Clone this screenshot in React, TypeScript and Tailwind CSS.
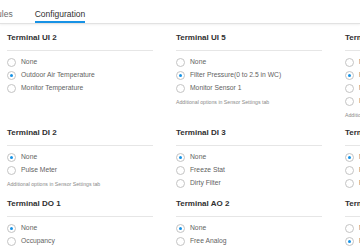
const sections = [
  {
    id: 1,
    title: "Terminal UI 2",
    options: ["None", "Outdoor Air Temperature", "Monitor Temperature"],
    selected: 1,
    note: false,
  },
  {
    id: 2,
    title: "Terminal UI 5",
    options: ["None", "Filter Pressure(0 to 2.5 in WC)", "Monitor Sensor 1"],
    selected: 1,
    note: true,
  },
  {
    id: 3,
    title: "Terminal UI 6",
    options: ["None", "Filter Pressure(0 to 2.5 in WC)", "Monitor Sensor 2", "Indoor Humidity"],
    selected: 1,
    note: true,
  },
  {
    id: 4,
    title: "Terminal DI 2",
    options: ["None", "Pulse Meter"],
    selected: 0,
    note: true,
  },
  {
    id: 5,
    title: "Terminal DI 3",
    options: ["None", "Freeze Stat", "Dirty Filter"],
    selected: 0,
    note: false,
  },
  {
    id: 6,
    title: "Terminal DI 4",
    options: ["None", "Fan Status", "Remote Occupancy"],
    selected: 0,
    note: false,
  },
  {
    id: 7,
    title: "Terminal DO 1",
    options: ["None", "Occupancy", "Alarm"],
    selected: 0,
    note: false,
  },
  {
    id: 8,
    title: "Terminal AO 2",
    options: ["None", "Free Analog", "Economizer"],
    selected: 0,
    note: false,
  },
  {
    id: 9,
    title: "Terminal AO 3",
    options: ["None", "Free Analog", "Economizer"],
    selected: 1,
    note: false,
  },
];

const Radio = ({ checked }: { checked: boolean }) => (
  <span className="flex h-[9px] w-[9px] shrink-0 items-center justify-center rounded-full border border-[#c4c4c4] bg-white">
    {checked && <span className="h-[3px] w-[3px] rounded-full bg-[#1792e5]" />}
  </span>
);

const App = () => {
  return (
    <div
      className="h-[250px] w-[360px] overflow-hidden bg-white"
      style={{ fontFamily: '"Liberation Sans", Arial, sans-serif' }}
    >
      {/* Tabs */}
      <div className="flex h-[24px] items-end border-b border-[#e2e2e2] shadow-[0_1px_2px_rgba(0,0,0,0.06)]">
        <div className="-ml-[27px] flex gap-[22px]">
          <div className="border-b-2 border-transparent pb-[1px] text-[8.5px] leading-[12px] text-[#6b6b6b]">
            Schedules
          </div>
          <div className="border-b-2 border-[#1792e5] pb-[1px] text-[8.5px] font-medium leading-[12px] text-[#303030]">
            Configuration
          </div>
        </div>
      </div>

      {/* Sections */}
      <div className="grid w-max grid-cols-[146px_146px_146px] gap-x-[23px] gap-y-[8px] px-[7px] pt-[8px]">
        {sections.map((s) => (
          <div key={s.id}>
            <h3 className="border-b border-[#e6e6e6] pb-[6px] text-[8px] font-bold leading-[12px] text-[#303030]">
              {s.title}
            </h3>
            <div className="mt-[5px]">
              {s.options.map((opt, i) => (
                <div key={opt} className="flex h-[13px] items-center gap-[5px]">
                  <Radio checked={i === s.selected} />
                  <span className="whitespace-nowrap text-[6.75px] text-[#5f5f5f]">{opt}</span>
                </div>
              ))}
            </div>
            {s.note && (
              <p className="mt-[3px] whitespace-nowrap text-[5.2px] leading-[8px] text-[#8a8a8a]">
                Additional options in Sensor Settings tab
              </p>
            )}
          </div>
        ))}
      </div>
    </div>
  );
};

export default App;
